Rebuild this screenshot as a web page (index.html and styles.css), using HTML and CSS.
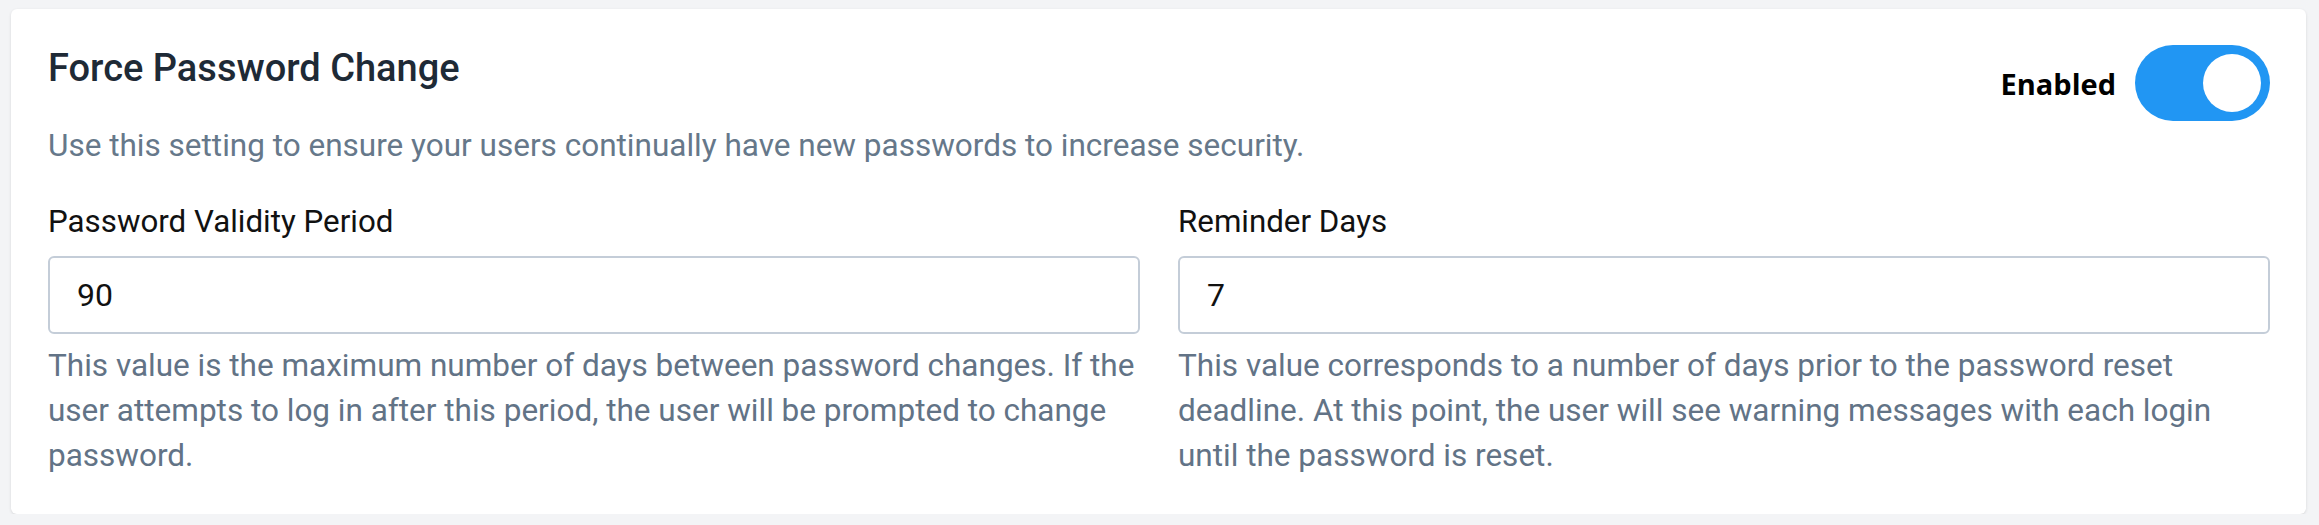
FILE: index.html
```html
<!DOCTYPE html>
<html lang="en">
<head>
    <meta charset="UTF-8">
    <meta name="viewport" content="width=device-width, initial-scale=1.0">
    <title>Password Settings</title>
    <link rel="stylesheet" href="styles.css">
</head>
<body>
    <div class="card">
        <div class="card-header">
            <div>
                <h2 class="title">Force Password Change</h2>
                <p class="description">Use this setting to ensure your users continually have new passwords to increase security.</p>
            </div>
            <div class="switch-group">
                <span class="switch-label">Enabled</span>
                <div class="switch on">
                    <span class="knob"></span>
                </div>
            </div>
        </div>

        <div class="fields">
            <div class="field">
                <label for="validity">Password Validity Period</label>
                <input type="text" id="validity" value="90">
                <p class="help">This value is the maximum number of days between password changes. If the user attempts to log in after this period, the user will be prompted to change password.</p>
            </div>
            <div class="field">
                <label for="reminder">Reminder Days</label>
                <input type="text" id="reminder" value="7">
                <p class="help">This value corresponds to a number of days prior to the password reset deadline. At this point, the user will see warning messages with each login until the password is reset.</p>
            </div>
        </div>
    </div>
</body>
</html>
```

FILE: styles.css
```css
body {
    margin: 0;
    padding: 9px 13px 0 11px;
    background: #f3f4f6;
    font-family: Roboto, "Liberation Sans", sans-serif;
}
.card {
    background: #ffffff;
    border-radius: 6px;
    box-shadow: 0px 1px 3px rgba(0, 0, 0, 0.12);
    padding: 36px 36px 36px 37px;
}
.card-header {
    display: flex;
    justify-content: space-between;
    align-items: flex-start;
}
.title {
    margin: 0;
    font-size: 38px;
    line-height: 46px;
    font-weight: 500;
    color: #1e2a36;
}
.description {
    margin: 33px 0 0 0;
    font-size: 31.5px;
    line-height: 44px;
    color: #66788a;
}
.switch-group {
    display: flex;
    align-items: center;
    gap: 19px;
}
.switch-label {
    font-family: "Open Sans", "Noto Sans", sans-serif;
    font-weight: 700;
    font-size: 29px;
    color: #000000;
}
.switch {
    width: 135px;
    height: 76px;
    border-radius: 38px;
    background: #c3ccd6;
    display: flex;
    align-items: center;
    padding: 0 9px;
    box-sizing: border-box;
}
.switch.on {
    background: #2196f3;
    justify-content: flex-end;
}
.knob {
    width: 58px;
    height: 58px;
    border-radius: 50%;
    background: #ffffff;
}
.fields {
    display: grid;
    grid-template-columns: 1fr 1fr;
    gap: 38px;
    margin-top: 32px;
}
.field label {
    display: block;
    font-size: 31.3px;
    line-height: 44px;
    color: #111111;
}
.field input {
    display: block;
    box-sizing: border-box;
    width: 100%;
    height: 78px;
    margin-top: 12px;
    padding: 0 27px;
    font-family: Roboto, "Liberation Sans", sans-serif;
    font-size: 32px;
    color: #111111;
    border: 2px solid #c4cdd8;
    border-radius: 6px;
    outline: none;
}
.help {
    margin: 9px 0 0 0;
    font-size: 31.5px;
    line-height: 45px;
    color: #627386;
}
```
